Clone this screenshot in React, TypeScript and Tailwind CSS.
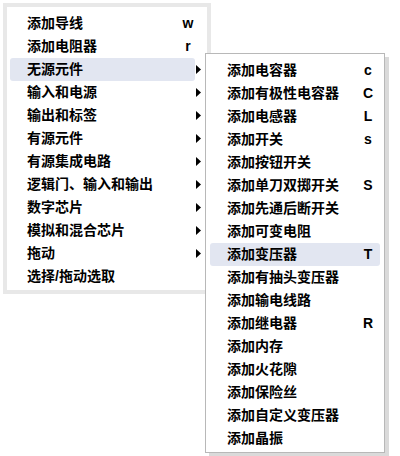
import React from "react";

type Item = { label: string; key?: string; sub?: boolean; hl?: boolean };

const mainItems: Item[] = [
  { label: "添加导线", key: "w" },
  { label: "添加电阻器", key: "r" },
  { label: "无源元件", sub: true, hl: true },
  { label: "输入和电源", sub: true },
  { label: "输出和标签", sub: true },
  { label: "有源元件", sub: true },
  { label: "有源集成电路", sub: true },
  { label: "逻辑门、输入和输出", sub: true },
  { label: "数字芯片", sub: true },
  { label: "模拟和混合芯片", sub: true },
  { label: "拖动", sub: true },
  { label: "选择/拖动选取" },
];

const subItems: Item[] = [
  { label: "添加电容器", key: "c" },
  { label: "添加有极性电容器", key: "C" },
  { label: "添加电感器", key: "L" },
  { label: "添加开关", key: "s" },
  { label: "添加按钮开关" },
  { label: "添加单刀双掷开关", key: "S" },
  { label: "添加先通后断开关" },
  { label: "添加可变电阻" },
  { label: "添加变压器", key: "T", hl: true },
  { label: "添加有抽头变压器" },
  { label: "添加输电线路" },
  { label: "添加继电器", key: "R" },
  { label: "添加内存" },
  { label: "添加火花隙" },
  { label: "添加保险丝" },
  { label: "添加自定义变压器" },
  { label: "添加晶振" },
];

const font = { fontFamily: '"Liberation Sans", "Noto Sans CJK SC", sans-serif' };

function Arrow() {
  return (
    <svg className="absolute left-[189px] top-[7px]" width="6" height="9" viewBox="0 0 6 9">
      <polygon points="0,0 5,4.5 0,9" fill="#000" />
    </svg>
  );
}

export default function App() {
  return (
    <div className="relative h-[456px] w-[400px] overflow-hidden bg-white text-black" style={font}>
      <div className="absolute left-[213px] top-[450px] text-[14px] font-bold text-[#8a8a8a] leading-[16px]">
        删除所选 天
      </div>
      <div className="m-[3px] h-[291px] w-[208px] border-4 border-[#e8e8e8] bg-white pt-[5px]">
        {mainItems.map((it) => (
          <div key={it.label} className="relative h-[23px]">
            <div
              className={
                "ml-[3px] flex h-[23px] w-[185px] items-center rounded-[3px] pl-[17px] text-[14px] font-bold leading-[23px] " +
                (it.hl ? "bg-[#e2e6f1]" : "")
              }
            >
              <span>{it.label}</span>
              {it.key && <span className="ml-auto w-[14px] text-center">{it.key}</span>}
            </div>
            {it.sub && <Arrow />}
          </div>
        ))}
      </div>
      <div className="absolute left-[205px] top-[53px] h-[400px] w-[180px] border border-[#b8b8b8] bg-white pt-[5px] shadow-[4px_4px_0_#dadada]">
        {subItems.map((it) => (
          <div
            key={it.label}
            className={
              "ml-[4px] flex h-[23px] w-[170px] items-center rounded-[3px] pl-[17px] text-[14px] font-bold leading-[23px] " +
              (it.hl ? "bg-[#e2e6f1]" : "")
            }
          >
            <span>{it.label}</span>
            {it.key && <span className="ml-auto w-[24px] text-center">{it.key}</span>}
          </div>
        ))}
      </div>
    </div>
  );
}
